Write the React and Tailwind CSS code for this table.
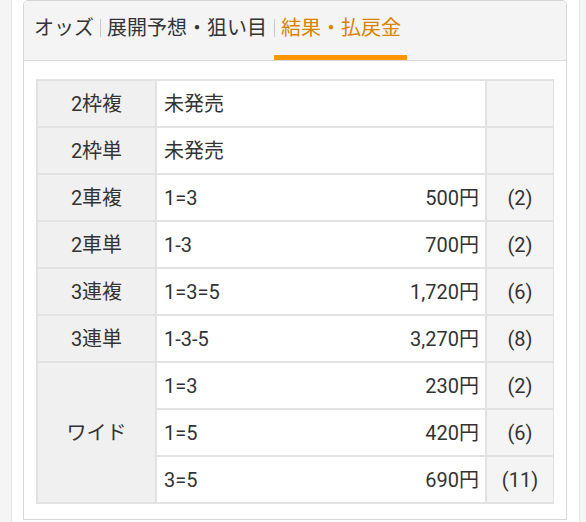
import React from "react";

const rows = [
  { label: "2枠複", combo: "未発売", amount: "", pop: "" },
  { label: "2枠単", combo: "未発売", amount: "", pop: "" },
  { label: "2車複", combo: "1=3", amount: "500円", pop: "(2)" },
  { label: "2車単", combo: "1-3", amount: "700円", pop: "(2)" },
  { label: "3連複", combo: "1=3=5", amount: "1,720円", pop: "(6)" },
  { label: "3連単", combo: "1-3-5", amount: "3,270円", pop: "(8)" },
];

const wide = [
  { combo: "1=3", amount: "230円", pop: "(2)" },
  { combo: "1=5", amount: "420円", pop: "(6)" },
  { combo: "3=5", amount: "690円", pop: "(11)" },
];

function Mid({ combo, amount }) {
  return (
    <div className="bg-white flex items-center justify-between pl-[7px] pr-[6px]">
      <span>{combo}</span>
      <span>{amount}</span>
    </div>
  );
}

export default function App() {
  return (
    <div
      className="h-[522px] w-[586px] bg-[#f5f5f5] pl-[11px] pr-[6px] text-[#333] overflow-hidden"
      style={{ fontFamily: 'Roboto, "Noto Sans CJK JP", sans-serif' }}
    >
      <div className="h-full bg-white border-x border-[#e6e6e6] pl-[11px] pr-[12px]">
        <div className="h-[520px] border border-[#d6d6d6] rounded-t-[5px] flex flex-col">
          <div className="h-[60px] bg-[#f4f4f4] border-b border-[#d9d9d9] rounded-t-[5px] flex items-stretch pl-[5px] text-[20px]">
            <div className="flex items-center pl-[5px] pr-[6px] border-b-[5px] border-transparent">オッズ</div>
            <div className="flex items-center border-b-[5px] border-transparent">
              <span className="w-px h-[18px] bg-[#c8c8c8]"></span>
            </div>
            <div className="flex items-center pl-[6px] pr-[7px] border-b-[5px] border-transparent">展開予想・狙い目</div>
            <div className="flex items-center border-b-[5px] border-[#ff9500] pr-[6px] text-[#d98300]">
              <span className="w-px h-[18px] bg-[#c8c8c8] mr-[6px]"></span>
              結果・払戻金
            </div>
          </div>
          <div className="pt-[18px] px-[12px]">
            <div className="grid grid-cols-[117px_328px_66px] auto-rows-[45px] gap-[2px] p-[2px] bg-[#e2e2e2] text-[20px]">
              {rows.map((r) => (
                <React.Fragment key={r.label}>
                  <div className="bg-[#f0f0f0] flex items-center justify-center">{r.label}</div>
                  <Mid combo={r.combo} amount={r.amount} />
                  <div className="bg-[#f4f4f4] flex items-center justify-center">{r.pop}</div>
                </React.Fragment>
              ))}
              <div className="bg-[#f0f0f0] row-span-3 flex items-center justify-center">ワイド</div>
              {wide.map((w) => (
                <React.Fragment key={w.combo}>
                  <Mid combo={w.combo} amount={w.amount} />
                  <div className="bg-[#f4f4f4] flex items-center justify-center">{w.pop}</div>
                </React.Fragment>
              ))}
            </div>
          </div>
        </div>
      </div>
    </div>
  );
}
